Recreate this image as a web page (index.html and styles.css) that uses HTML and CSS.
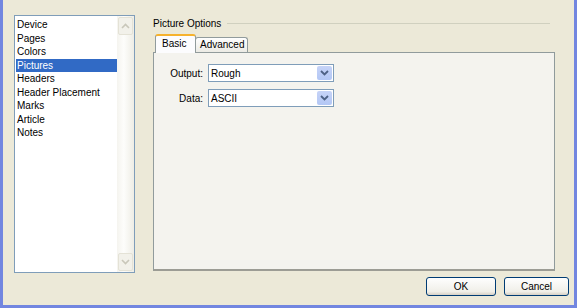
FILE: index.html
```html
<!DOCTYPE html>
<html>
<head>
    <title>Print Options</title>
    <link rel="stylesheet" href="styles.css">
</head>
<body>
    <div class="window">
        <div class="main">
            <div class="list">
                <ul class="items">
                    <li>Device</li>
                    <li>Pages</li>
                    <li>Colors</li>
                    <li class="selected">Pictures</li>
                    <li>Headers</li>
                    <li>Header Placement</li>
                    <li>Marks</li>
                    <li>Article</li>
                    <li>Notes</li>
                </ul>
                <div class="scroll">
                    <div class="arrow"><svg width="9" height="6" viewBox="0 0 9 6"><path d="M1 5 L4.5 1.5 L8 5" fill="none" stroke="#c9c7ba" stroke-width="1.6"/></svg></div>
                    <div class="arrow"><svg width="9" height="6" viewBox="0 0 9 6"><path d="M1 1 L4.5 4.5 L8 1" fill="none" stroke="#c9c7ba" stroke-width="1.6"/></svg></div>
                </div>
            </div>
            <div class="options">
                <div class="legend">
                    <span>Picture Options</span>
                    <div class="rule"></div>
                </div>
                <div class="tabs">
                    <div class="tab active">Basic</div>
                    <div class="tab">Advanced</div>
                </div>
                <div class="panel">
                    <div class="field">
                        <label>Output:</label>
                        <div class="select">
                            <span>Rough</span>
                            <div class="drop"><svg width="9" height="6" viewBox="0 0 9 6"><path d="M1 1 L4.5 4.5 L8 1" fill="none" stroke="#4d6185" stroke-width="1.8"/></svg></div>
                        </div>
                    </div>
                    <div class="field">
                        <label>Data:</label>
                        <div class="select">
                            <span>ASCII</span>
                            <div class="drop"><svg width="9" height="6" viewBox="0 0 9 6"><path d="M1 1 L4.5 4.5 L8 1" fill="none" stroke="#4d6185" stroke-width="1.8"/></svg></div>
                        </div>
                    </div>
                </div>
            </div>
        </div>
        <div class="buttons">
            <button class="btn ok">OK</button>
            <button class="btn">Cancel</button>
        </div>
    </div>
</body>
</html>
```

FILE: styles.css
```css
body {
    margin: 0;
    font-family: "Liberation Sans", Arial, sans-serif;
    font-size: 10px;
    color: #000;
}

.window {
    width: 577px;
    height: 308px;
    box-sizing: border-box;
    background-color: #ece9d8;
    border-left: 3px solid #7286e0;
    border-right: 3px solid #7286e0;
    border-bottom: 3px solid #7286e0;
    display: flex;
    flex-direction: column;
}

.main {
    display: flex;
    padding: 15px 0 0 11px;
}

.list {
    width: 121px;
    height: 258px;
    box-sizing: border-box;
    border: 1px solid #7f9db9;
    background-color: #fff;
    display: flex;
}

.items {
    flex: 1;
    list-style: none;
    margin: 0;
    padding: 2px 0 0 1px;
}

.items li {
    height: 13.5px;
    line-height: 13px;
    padding-left: 1px;
}

.items li.selected {
    background-color: #316ac5;
    color: #fff;
}

.scroll {
    width: 17px;
    background: linear-gradient(to right, #f5f4ef, #fdfdfb 40%, #eeede5);
    display: flex;
    flex-direction: column;
    justify-content: space-between;
}

.arrow {
    height: 16px;
    margin: 1px;
    border: 1px solid #e4e2d6;
    border-radius: 2px;
    background-color: #f2f1ea;
    display: flex;
    align-items: center;
    justify-content: center;
}

.options {
    margin-left: 18px;
    width: 402px;
}

.legend {
    display: flex;
    align-items: center;
    height: 14px;
    margin-top: 1px;
}

.legend span {
    padding-right: 6px;
}

.rule {
    flex: 1;
    height: 1px;
    margin-right: 5px;
    background-color: #d0d0bf;
}

.tabs {
    display: flex;
    align-items: flex-end;
    margin-top: 5px;
    padding-left: 2px;
    height: 17px;
}

.tab {
    height: 14px;
    line-height: 14px;
    padding: 0 3px 0 4px;
    border: 1px solid #919b9c;
    border-bottom: none;
    border-radius: 3px 3px 0 0;
    background: linear-gradient(#fefefe, #ecebe5);
}

.tab.active {
    height: 17px;
    line-height: 16px;
    width: 27px;
    padding: 0 6px;
    border-top: 2px solid #f6b22d;
    background: #fcfcfe;
    position: relative;
    top: 1px;
    margin-right: -1px;
}

.panel {
    height: 219px;
    box-sizing: border-box;
    border: 1px solid #919b9c;
    border-right-color: #8f9a9b;
    border-bottom: 2px solid #9c9c94;
    background-color: #f4f3ee;
    padding-top: 11px;
}

.field {
    display: flex;
    align-items: center;
    margin-bottom: 7px;
}

.field label {
    width: 49px;
    text-align: right;
    margin-right: 5px;
}

.select {
    width: 126px;
    height: 18px;
    box-sizing: border-box;
    border: 1px solid #7f9db9;
    background-color: #fff;
    display: flex;
    align-items: center;
    padding-left: 2px;
}

.select span {
    flex: 1;
}

.drop {
    width: 15px;
    height: 14px;
    margin-right: 1px;
    border-radius: 2px;
    background: linear-gradient(#c6d3f7, #b3c7f5);
    display: flex;
    align-items: center;
    justify-content: center;
}

.buttons {
    display: flex;
    justify-content: flex-end;
    gap: 8px;
    margin-top: 4px;
    padding-right: 5px;
}

.btn {
    height: 19px;
    box-sizing: border-box;
    border: 1px solid #003c74;
    border-radius: 3px;
    background: linear-gradient(#fefefe, #f0efe8 80%, #d6d0c5);
    font-family: "Liberation Sans", Arial, sans-serif;
    font-size: 10px;
    padding: 0;
    width: 65px;
}

.btn.ok {
    width: 70px;
}
```
